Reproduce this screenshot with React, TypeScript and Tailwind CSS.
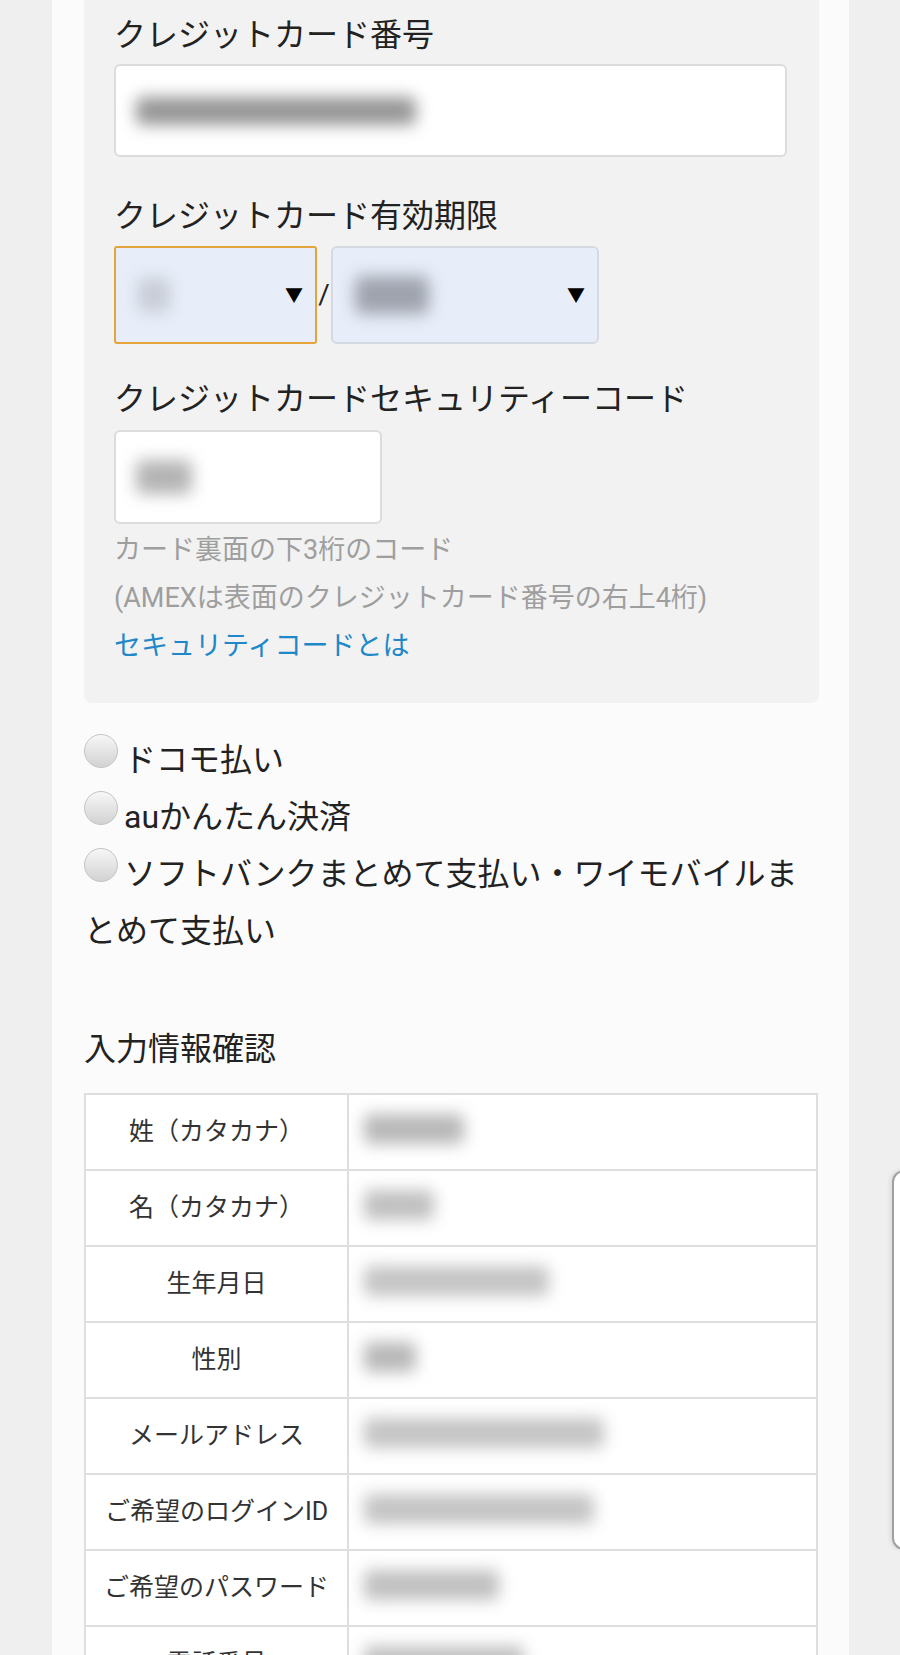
import React from "react";

const font = { fontFamily: 'Roboto, "Noto Sans CJK JP", sans-serif' };

function Blur({ w, tone = "#8a8a8a", h = 26 }: { w: number; tone?: string; h?: number }) {
  return (
    <span
      className="inline-block rounded-[6px] blur-[8px]"
      style={{ width: w, height: h, background: tone }}
    />
  );
}

function Radio({ label }: { label: string }) {
  return (
    <div className="text-[32px] leading-[57px] text-[#222]">
      <span className="inline-block w-[34px] h-[34px] rounded-full border border-[#c4c4c4] bg-gradient-to-b from-[#f7f7f7] to-[#d2d2d2] align-[3px] mr-[6px]" />
      {label}
    </div>
  );
}

const rows: [string, number, string][] = [
  ["姓（カタカナ）", 100, "#b8b8b8"],
  ["名（カタカナ）", 70, "#c0c0c0"],
  ["生年月日", 185, "#c4c4c4"],
  ["性別", 52, "#b8b8b8"],
  ["メールアドレス", 240, "#c4c4c4"],
  ["ご希望のログインID", 230, "#c4c4c4"],
  ["ご希望のパスワード", 135, "#c0c0c0"],
  ["電話番号", 160, "#c0c0c0"],
];

export default function App() {
  return (
    <div className="relative w-[900px] h-[1655px] overflow-hidden bg-[#efefef]" style={font}>
      <div className="ml-[52px] w-[797px] h-full bg-[#fbfbfb] pl-[32px] pr-[30px]">
        {/* Credit card panel */}
        <div className="bg-[#f2f2f2] rounded-b-[8px] px-[30px] pt-[13px] pb-[33px]">
          <div className="text-[32px] leading-[44px] text-[#222]">クレジットカード番号</div>
          <div className="mt-[7px] h-[93px] w-[673px] rounded-[6px] border-2 border-[#dcdcdc] bg-white flex items-center pl-[20px]">
            <Blur w={280} h={28} tone="#969696" />
          </div>

          <div className="mt-[37px] text-[32px] leading-[44px] text-[#222]">クレジットカード有効期限</div>
          <div className="mt-[8px] flex items-center">
            <div className="h-[98px] w-[203px] rounded-[3px] border-2 border-[#e3a43c] bg-[#e8eef9] flex items-center justify-between pl-[22px] pr-[12px]">
              <Blur w={32} h={34} tone="#c7ccd6" />
              <span className="text-[18px] text-black">▼</span>
            </div>
            <span className="w-[14px] text-center text-[28px] text-[#222]">/</span>
            <div className="h-[98px] w-[268px] rounded-[6px] border-2 border-[#d5d9e1] bg-[#e8eef9] flex items-center justify-between pl-[22px] pr-[12px]">
              <Blur w={74} h={38} tone="#9ea3ae" />
              <span className="text-[18px] text-black">▼</span>
            </div>
          </div>

          <div className="mt-[33px] text-[32px] leading-[44px] text-[#222]">クレジットカードセキュリティーコード</div>
          <div className="mt-[9px] h-[94px] w-[268px] rounded-[6px] border-2 border-[#dcdcdc] bg-white flex items-center pl-[20px]">
            <Blur w={56} h={34} tone="#b4b4b4" />
          </div>
          <div className="mt-[2px] text-[27px] leading-[48px] text-[#9e9e9e]">
            <div>カード裏面の下3桁のコード</div>
            <div>(AMEXは表面のクレジットカード番号の右上4桁)</div>
            <div className="text-[#1e88c8]">セキュリティコードとは</div>
          </div>
        </div>

        {/* Radios */}
        <div className="mt-[29px]">
          <Radio label="ドコモ払い" />
          <Radio label="auかんたん決済" />
          <Radio label="ソフトバンクまとめて支払い・ワイモバイルまとめて支払い" />
        </div>

        <div className="mt-[67px] text-[32px] leading-[44px] text-[#222]">入力情報確認</div>

        <table className="mt-[22px] w-[734px] border-collapse bg-white">
          <tbody>
            {rows.map(([label, w, tone]) => (
              <tr key={label} className="h-[76px]">
                <td className="w-[263px] border-2 border-[#dedede] text-center text-[25px] text-[#333]">
                  {label}
                </td>
                <td className="border-2 border-[#dedede] pl-[15px]">
                  <Blur w={w} h={30} tone={tone} />
                </td>
              </tr>
            ))}
          </tbody>
        </table>
      </div>

      {/* edge handle overlay */}
      <div className="absolute right-[-4px] top-[1170px] h-[380px] w-[12px] rounded-l-[12px] border-2 border-[#a0a0a0] bg-white shadow-[-2px_0_4px_rgba(0,0,0,0.08)]" />
    </div>
  );
}
